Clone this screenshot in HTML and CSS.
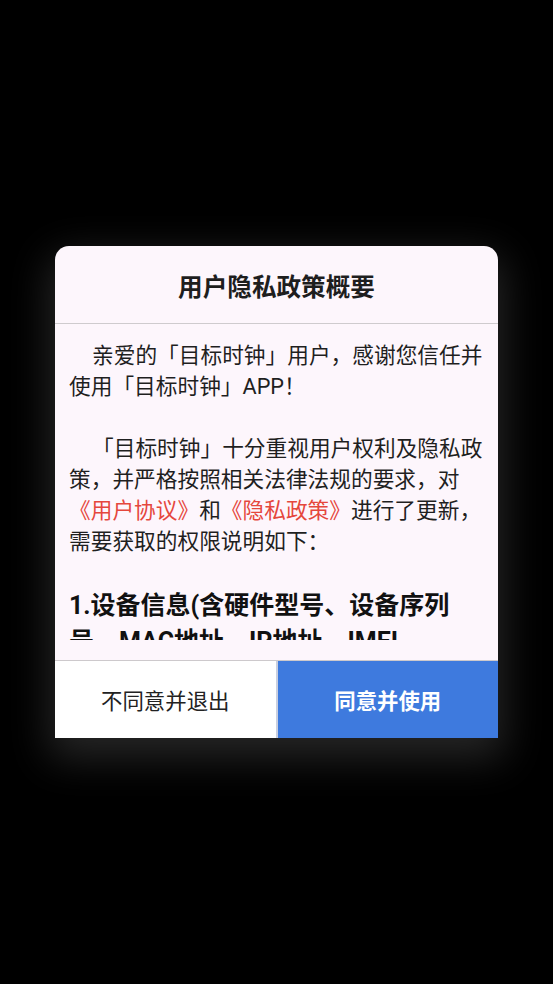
FILE: index.html
```html
<!DOCTYPE html>
<html lang="zh-CN">
<head>
<meta charset="utf-8">
<title>用户隐私政策概要</title>
<link rel="stylesheet" href="styles.css">
</head>
<body>
<div class="screen">
  <div class="dialog">
    <div class="title">用户隐私政策概要</div>
    <div class="body">
      <div class="scroll">
        <p class="para">亲爱的「目标时钟」用户，感谢您信任并使用「目标时钟」APP！</p>
        <p class="blank">&nbsp;</p>
        <p class="para">「目标时钟」十分重视用户权利及隐私政策，并严格按照相关法律法规的要求，对<span class="link">《用户协议》</span>和<span class="link">《隐私政策》</span>进行了更新，需要获取的权限说明如下：</p>
        <p class="blank">&nbsp;</p>
        <p class="heading">1.设备信息(含硬件型号、设备序列号、MAC地址、IP地址、IMEI AndroidID等)</p>
      </div>
    </div>
    <div class="actions">
      <div class="btn btn-cancel">不同意并退出</div>
      <div class="btn btn-ok">同意并使用</div>
    </div>
  </div>
</div>
</body>
</html>
```

FILE: styles.css
```css
html, body {
  margin: 0;
  padding: 0;
  background: #000;
}
body {
  font-family: Roboto, "Noto Sans CJK SC", sans-serif;
}
.screen {
  width: 553px;
  height: 984px;
  display: flex;
  align-items: center;
  justify-content: center;
}
.dialog {
  width: 443px;
  height: 492px;
  background: #fdf6fc;
  border-radius: 14px 14px 0 0;
  display: flex;
  flex-direction: column;
  box-shadow: 0 14px 40px 6px rgba(70, 70, 70, 0.55);
  overflow: hidden;
}
.title {
  height: 77px;
  display: flex;
  align-items: center;
  justify-content: center;
  font-size: 24.6px;
  font-weight: 700;
  color: #1e1e1e;
  border-bottom: 1px solid #cfcbce;
}
.body {
  padding: 16px 14px 20px;
  height: 300px;
  flex: none;
}
.scroll {
  height: 300px;
  overflow: hidden;
}
.scroll p {
  margin: 0;
}
.para {
  font-size: 21.7px;
  line-height: 31px;
  color: #1f1f1f;
  text-indent: 23px;
}
.blank {
  font-size: 21.7px;
  line-height: 31px;
}
.link {
  color: #e5473d;
}
.heading {
  font-size: 25px;
  line-height: 36px;
  font-weight: 700;
  color: #111;
}
.actions {
  flex: 1;
  display: flex;
  border-top: 1px solid #cdc9cc;
}
.btn {
  flex: 1;
  display: flex;
  align-items: center;
  justify-content: center;
  font-size: 21.4px;
}
.btn-cancel {
  background: #fff;
  color: #222;
  border-right: 2px solid #c9cfe0;
}
.btn-ok {
  background: #3e7ade;
  color: #fff;
  font-weight: 700;
}
```
